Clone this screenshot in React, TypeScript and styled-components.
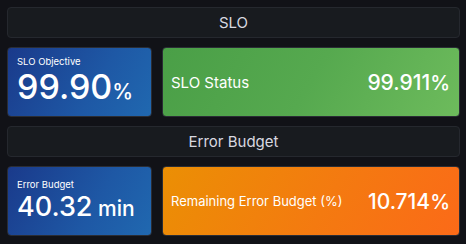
import React, { FC } from 'react';
import styled, { createGlobalStyle } from 'styled-components';

const GlobalStyle = createGlobalStyle`
  html, body {
    margin: 0;
    padding: 0;
    background: #111217;
    font-family: Inter, "Noto Sans", sans-serif;
    color: #ccccdc;
  }
`;

const App: FC = () => {
  return (
    <>
      <GlobalStyle />
      <Dashboard>
        <RowHeader>SLO</RowHeader>
        <StatRow>
          <StatPanel $tone="blue" $stacked>
            <StatTitle>SLO Objective</StatTitle>
            <BigValue $size={34}>
              99.90<Unit $size={21}>%</Unit>
            </BigValue>
          </StatPanel>
          <StatPanel $tone="green">
            <InlineTitle $size={15}>SLO Status</InlineTitle>
            <BigValue $size={21}>
              99.911<Unit $size={20}>%</Unit>
            </BigValue>
          </StatPanel>
        </StatRow>
        <RowHeader>Error Budget</RowHeader>
        <StatRow>
          <StatPanel $tone="blue" $stacked>
            <StatTitle>Error Budget</StatTitle>
            <BigValue $size={27}>
              40.32<Unit $size={21}> min</Unit>
            </BigValue>
          </StatPanel>
          <StatPanel $tone="orange">
            <InlineTitle $size={13}>Remaining Error Budget (%)</InlineTitle>
            <BigValue $size={21}>
              10.714<Unit $size={20}>%</Unit>
            </BigValue>
          </StatPanel>
        </StatRow>
      </Dashboard>
    </>
  );
};

export default App;

type Tone = 'blue' | 'green' | 'orange';

const gradients: Record<Tone, string> = {
  blue: 'linear-gradient(120deg, #1a3a8b 0%, #1e58a5 60%, #2068b0 100%)',
  green: 'linear-gradient(120deg, #4a9f47 0%, #56a94f 50%, #6dbb5c 100%)',
  orange: 'linear-gradient(120deg, #eb8f04 0%, #f47a10 55%, #fb6a18 100%)',
};

const Dashboard = styled.div`
  display: grid;
  grid-template-rows: 31px 70px 31px 70px;
  row-gap: 9px;
  padding: 7px 6px 0 7px;
`;

const RowHeader = styled.div`
  display: flex;
  align-items: center;
  justify-content: center;
  background: #181b1f;
  border: 1px solid #25282e;
  border-radius: 4px;
  font-size: 15px;
  font-weight: 400;
  color: #d8d9e0;
`;

const StatRow = styled.div`
  display: grid;
  grid-template-columns: 145px 1fr;
  column-gap: 10px;
`;

const StatPanel = styled.div<{ $tone: Tone; $stacked?: boolean }>`
  display: flex;
  flex-direction: ${(p) => (p.$stacked ? 'column' : 'row')};
  justify-content: ${(p) => (p.$stacked ? 'center' : 'space-between')};
  align-items: ${(p) => (p.$stacked ? 'flex-start' : 'center')};
  gap: ${(p) => (p.$stacked ? '2px' : '8px')};
  padding: ${(p) => (p.$stacked ? '0 9px 4px 9px' : '0 9px 0 8px')};
  background: ${(p) => gradients[p.$tone]};
  border: 1px solid #2a2d35;
  border-radius: 4px;
  color: #ffffff;
`;

const StatTitle = styled.div`
  font-size: 9.5px;
  font-weight: 400;
  line-height: 12px;
`;

const InlineTitle = styled.div<{ $size: number }>`
  font-size: ${(p) => p.$size}px;
  font-weight: 400;
  white-space: nowrap;
`;

const BigValue = styled.div<{ $size: number }>`
  font-size: ${(p) => p.$size}px;
  font-weight: 500;
  line-height: 1;
  white-space: pre;
`;

const Unit = styled.span<{ $size: number }>`
  font-size: ${(p) => p.$size}px;
`;
